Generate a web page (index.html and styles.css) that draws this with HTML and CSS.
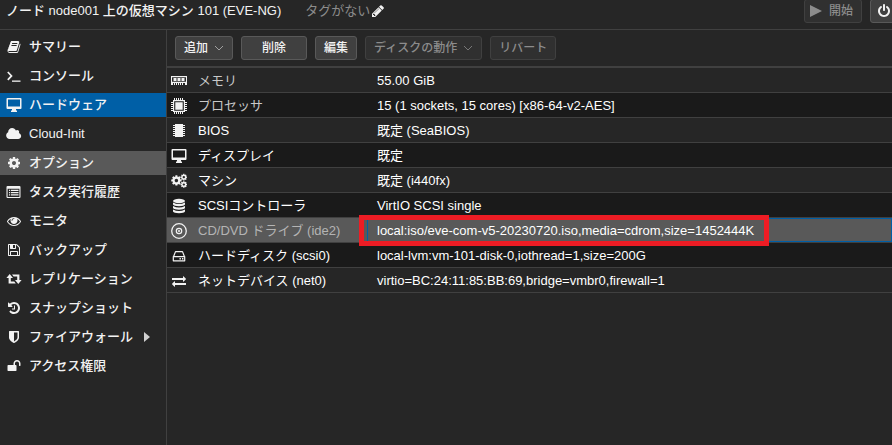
FILE: index.html
```html
<!DOCTYPE html>
<html lang="ja">
<head>
<meta charset="utf-8">
<title>node001 - EVE-NG</title>
<link rel="stylesheet" href="styles.css">
</head>
<body>
<svg class="defs" aria-hidden="true">
  <defs>
    <path id="cog" d="M1152 896q0-106-75-181t-181-75-181 75-75 181 75 181 181 75 181-75 75-181zm512-109v222q0 12-8 23t-20 13l-185 28q-19 54-39 91 35 50 107 138 10 12 10 25t-9 23q-27 37-99 108t-94 71q-12 0-26-9l-138-108q-44 23-91 38-16 136-29 186-7 28-36 28h-222q-14 0-24.5-8.5t-11.5-21.5l-28-184q-49-16-90-37l-141 107q-10 9-25 9-14 0-25-11-126-114-165-168-7-10-7-23 0-12 8-23 15-21 51-66.5t54-70.5q-27-50-41-99l-183-27q-13-2-21-12.5t-8-23.5v-222q0-12 8-23t19-13l186-28q14-46 39-92-40-57-107-138-10-12-10-24 0-10 9-23 26-36 98.5-107.5t94.5-71.5q13 0 26 10l138 107q44-23 91-38 16-136 29-186 7-28 36-28h222q14 0 24.5 8.5t11.5 21.5l28 184q49 16 90 37l142-107q9-9 24-9 13 0 25 10 129 119 165 170 7 8 7 22 0 12-8 23-15 21-51 66.5t-54 70.5q26 50 41 98l183 28q13 2 21 12.5t8 23.5z"/>
    <path id="desktop" fill-rule="evenodd" d="M1.5 1h13a1 1 0 0 1 1 1v9a1 1 0 0 1-1 1H10v1l1 1v1H5v-1l1-1v-1H1.500a1 1 0 0 1-1-1V2a1 1 0 0 1 1-1zM2 2.500v7h12v-7z"/>
  </defs>
</svg>

<header class="topbar">
  <h1 class="title">ノード node001 上の仮想マシン 101 (EVE-NG)</h1>
  <span class="tags">タグがない</span>
  <button class="edit-tags" type="button" aria-label="編集"><svg class="icon" viewBox="-128 -128 2048 2048"><path d="M491 1536l91-91-235-235-91 91v107h128v128h107zm523-928q0-22-22-22-10 0-17 7l-542 542q-7 7-7 17 0 22 22 22 10 0 17-7l542-542q7-7 7-17zm-54-192l416 416-832 832h-416v-416zm683 96q0 53-37 90l-166 166-416-416 166-165q36-38 90-38 53 0 91 38l235 234q37 39 37 91z"/></svg></button>
  <div class="power">
    <button class="btn start" type="button" disabled><svg class="play" viewBox="0 0 12 12"><path d="M0 0L12 6L0 12z"/></svg>開始</button>
    <button class="btn shutdown" type="button" aria-label="シャットダウン"><svg class="icon" viewBox="-128 -128 2048 2048"><path d="M1664 896q0 156-61 298t-164 245-245 164-298 61-298-61-245-164-164-245-61-298q0-182 80.500-343t226.500-270q43-32 95.500-25t83.500 50q32 42 24.500 94.500t-49.500 84.500q-98 74-151.500 181t-53.500 228q0 104 40.500 198.500t109.500 163.500 163.500 109.500 198.500 40.500 198.500-40.500 163.500-109.500 109.500-163.500 40.500-198.500q0-121-53.500-228t-151.500-181q-42-32-49.500-84.500t24.500-94.500q31-43 84-50t95 25q146 109 226.500 270t80.500 343zm-640-768v640q0 52-38 90t-90 38-90-38-38-90v-640q0-52 38-90t90-38 90 38 38 90z"/></svg></button>
  </div>
</header>

<div class="body">
  <nav class="side">
    <a href="#"><svg class="icon" viewBox="-128 -128 2048 2048"><path d="M1703 478q40 57 18 129l-275 906q-19 64-76.500 107.500t-122.500 43.500h-923q-77 0-148.500-53.500t-99.500-131.500q-24-67-2-127 0-4 3-27t4-37q1-8-3-21.500t-3-19.500q2-11 8-21t16.500-23.500 16.500-23.500q23-38 45-91.500t30-91.500q3-10 .5-30t-.5-28q3-11 17-28t17-23q21-36 42-92t25-90q1-9-2.500-32t.5-28q4-13 22-30.500t22-22.500q19-26 42.500-84.500t27.500-96.500q1-8-3-25.500t-2-26.500q2-8 9-18t18-23 17-21q8-12 16.500-30.500t15-35 16-36 19.500-32 26.500-23.500 36-11.500 47.500 5.500l-1 3q38-9 51-9h761q74 0 114 56t18 130l-274 906q-36 119-71.500 153.500t-128.500 34.500h-869q-27 0-38 15-11 16-1 43 24 70 144 70h923q29 0 56-15.500t35-41.500l300-987q7-22 5-57 38 15 59 43zm-1064 2q-4 13 2 22.500t20 9.500h608q13 0 25.500-9.500t16.500-22.500l21-64q4-13-2-22.500t-20-9.500h-608q-13 0-25.500 9.500t-16.500 22.500zm-83 256q-4 13 2 22.500t20 9.500h608q13 0 25.500-9.500t16.500-22.500l21-64q4-13-2-22.500t-20-9.500h-608q-13 0-25.500 9.500t-16.500 22.500z"/></svg>サマリー</a>
    <a href="#"><svg class="icon" viewBox="0 0 16 16"><path d="M1.800 4L5.500 7.900L1.800 11.800" fill="none" stroke="currentColor" stroke-width="1.700"/><path d="M6 12.500h8.500v1.300H6z"/></svg>コンソール</a>
    <a href="#" class="current" aria-current="page"><svg class="icon" viewBox="0 0 16 16"><use href="#desktop"/></svg>ハードウェア</a>
    <a href="#"><svg class="icon" viewBox="-20 -128 2048 2048"><path d="M1920 1152q0 159-112.500 271.500t-271.500 112.500h-1088q-185 0-316.500-131.500t-131.500-316.500q0-132 71-241.500t187-163.500q-2-28-2-43 0-212 150-362t362-150q158 0 286.500 88t187.500 230q70-62 166-62 106 0 181 75t75 181q0 75-41 138 129 30 213 134.500t84 239.500z"/></svg>Cloud-Init</a>
    <a href="#" class="hover"><svg class="icon" viewBox="-128 -128 2048 2048"><use href="#cog"/></svg>オプション</a>
    <a href="#"><svg class="icon" viewBox="0 0 16 16"><path fill-rule="evenodd" d="M1.500 2h12a1 1 0 0 1 1 1v10a1 1 0 0 1-1 1h-12a1 1 0 0 1-1-1V3a1 1 0 0 1 1-1zM1.600 4.700v8.200h11.800V4.700zM3 5.800h1.200v1.200H3zM5 5.800h7.500v1.200H5zM3 8h1.200v1.200H3zM5 8h7.500v1.200H5zM3 10.200h1.200v1.200H3zM5 10.200h7.500v1.200H5z"/></svg>タスク実行履歴</a>
    <a href="#"><svg class="icon" viewBox="-128 -128 2048 2048"><path d="M1664 960q-152-236-381-353 61 104 61 225 0 185-131.500 316.500t-316.500 131.500-316.500-131.500-131.500-316.500q0-121 61-225-229 117-381 353 133 205 333.500 326.500t434.500 121.500 434.500-121.500 333.500-326.500zm-720-384q0-20-14-34t-34-14q-125 0-214.500 89.500t-89.500 214.500q0 20 14 34t34 14 34-14 14-34q0-86 61-147t147-61q20 0 34-14t14-34zm848 384q0 34-20 69-140 230-376.500 368.500t-499.500 138.500-499.500-139-376.500-368q-20-35-20-69t20-69q140-229 376.500-368t499.500-139 499.500 139 376.500 368q20 35 20 69z"/></svg>モニタ</a>
    <a href="#"><svg class="icon" viewBox="-128 -128 2048 2048"><path d="M512 1536h768v-384h-768v384zm896 0h128v-896q0-14-10-38.500t-20-34.500l-281-281q-10-10-34-20t-39-10v416q0 40-28 68t-68 28h-576q-40 0-68-28t-28-68v-416h-128v1280h128v-416q0-40 28-68t68-28h832q40 0 68 28t28 68v416zm-384-928v-320q0-13-9.500-22.500t-22.500-9.500h-192q-13 0-22.500 9.500t-9.500 22.500v320q0 13 9.500 22.500t22.500 9.500h192q13 0 22.500-9.500t9.500-22.500zm640 32v928q0 40-28 68t-68 28h-1344q-40 0-68-28t-28-68v-1344q0-40 28-68t68-28h928q40 0 88 20t76 48l280 280q28 28 48 76t20 88z"/></svg>バックアップ</a>
    <a href="#"><svg class="icon" viewBox="0 0 16 16"><path d="M3.700 3L.4 7h2.200v5.500h7.200L8.200 10.500H4.800V7h2.200zM6 3.500h7.400V9h2.200l-3.300 4L9 9h2.200V5.500H7.600z"/></svg>レプリケーション</a>
    <a href="#"><svg class="icon" viewBox="-128 -128 2048 2048"><path d="M1664 896q0 156-61 298t-164 245-245 164-298 61q-172 0-327-72.500t-264-204.500q-7-10-6.500-22.500t8.500-20.500l137-138q10-9 25-9 16 2 23 12 73 95 179 147t225 52q104 0 198.500-40.500t163.500-109.500 109.500-163.500 40.500-198.500-40.500-198.500-109.500-163.500-163.500-109.500-198.500-40.500q-98 0-188 35.500t-160 101.500l137 138q31 30 14 69-17 40-59 40h-448q-26 0-45-19t-19-45v-448q0-42 40-59 39-17 69 14l130 129q107-101 244.500-156.500t284.500-55.500q156 0 298 61t245 164 164 245 61 298zm-640-288v448q0 14-9 23t-23 9h-320q-14 0-23-9t-9-23v-64q0-14 9-23t23-9h224v-352q0-14 9-23t23-9h64q14 0 23 9t9 23z"/></svg>スナップショット</a>
    <a href="#"><svg class="icon" viewBox="-128 -128 2048 2048"><path d="M1344 960v-640h-448v1137q119-63 213-137 235-184 235-360zm192-768v768q0 86-33.500 170.500t-83 150-118 127.500-126.500 103-121 77.500-89.500 49.500-42.500 20q-12 6-26 6t-26-6q-16-7-42.500-20t-89.500-49.500-121-77.500-126.500-103-118-127.500-83-150-33.500-170.500v-768q0-26 19-45t45-19h1152q26 0 45 19t19 45z"/></svg>ファイアウォール<svg class="more" viewBox="0 0 6 10"><path d="M0 0L6 5L0 10z"/></svg></a>
    <a href="#"><svg class="icon" viewBox="-128 -128 2048 2048"><path d="M1728 576v256q0 26-19 45t-45 19h-64q-26 0-45-19t-19-45v-256q0-106-75-181t-181-75-181 75-75 181v192h96q40 0 68 28t28 68v576q0 40-28 68t-68 28h-960q-40 0-68-28t-28-68v-576q0-40 28-68t68-28h672v-192q0-185 131.500-316.500t316.500-131.500 316.500 131.500 131.500 316.500z"/></svg>アクセス権限</a>
  </nav>

  <main class="panel">
    <div class="toolbar">
      <button class="btn" type="button">追加<svg class="chev" viewBox="0 0 10 6"><path d="M1 1L5 5L9 1"/></svg></button>
      <button class="btn wide" type="button">削除</button>
      <button class="btn" type="button">編集</button>
      <button class="btn" type="button" disabled>ディスクの動作<svg class="chev" viewBox="0 0 10 6"><path d="M1 1L5 5L9 1"/></svg></button>
      <button class="btn wide" type="button" disabled>リバート</button>
    </div>
    <table class="grid">
      <tbody>
        <tr><th scope="row" class="dim"><div class="key"><svg class="icon" viewBox="0 0 16 16"><path fill-rule="evenodd" d="M0 3h16v7H0zM1 4.300v4.400h14V4.300zM2.500 5h3v3h-3zM6.500 5h3v3h-3zM10.500 5h3v3h-3zM0 10h2v2H0zM3 10h1v2H3zM5 10h1v2H5zM7 10h1v2H7zM9 10h1v2H9zM11 10h1v2h-1zM14 10h2v2h-2z"/></svg>メモリ</div></th><td>55.00 GiB</td></tr>
        <tr><th scope="row" class="dim"><div class="key"><svg class="icon" viewBox="0 0 16 16"><path fill-rule="evenodd" d="M2 2h12v12H2zM3.200 3.200v9.600h9.600V3.200zM4.300 4.300h7.400v7.400H4.300z"/><path d="M3.500 0v2M5.500 0v2M7.500 0v2M9.500 0v2M11.500 0v2M3.500 14v2M5.500 14v2M7.500 14v2M9.500 14v2M11.500 14v2M0 4.500h2M0 6.500h2M0 8.500h2M0 10.500h2M0 12.500h2M14 4.500h2M14 6.500h2M14 8.500h2M14 10.500h2M14 12.500h2" stroke="currentColor"/></svg>プロセッサ</div></th><td>15 (1 sockets, 15 cores) [x86-64-v2-AES]</td></tr>
        <tr><th scope="row"><div class="key"><svg class="icon" viewBox="0 0 16 16"><path d="M4 1h8v13H4z"/><path d="M2 2.500h12M2 4.500h12M2 6.500h12M2 8.500h12M2 10.500h12M2 12.500h12" stroke="currentColor"/></svg>BIOS</div></th><td>既定 (SeaBIOS)</td></tr>
        <tr><th scope="row"><div class="key"><svg class="icon" viewBox="0 0 16 16"><use href="#desktop"/></svg>ディスプレイ</div></th><td>既定</td></tr>
        <tr><th scope="row"><div class="key"><svg class="icon" viewBox="0 0 2048 2048"><use href="#cog" transform="translate(-80 180) scale(.86)"/><use href="#cog" transform="translate(1140 30) scale(.56)"/><use href="#cog" transform="translate(1140 970) scale(.56)"/></svg>マシン</div></th><td>既定 (i440fx)</td></tr>
        <tr><th scope="row"><div class="key"><svg class="icon" viewBox="0 0 16 16"><ellipse cx="8" cy="3" rx="6" ry="2.200"/><path d="M2 4.500q6 3 12 0v2q-1 1.700-6 1.700T2 6.500zM2 8q6 3 12 0v2q-1 1.700-6 1.700T2 10zM2 11.500q6 3 12 0v2q-1 1.700-6 1.700T2 13.500z"/></svg>SCSIコントローラ</div></th><td>VirtIO SCSI single</td></tr>
        <tr class="selected"><th scope="row"><div class="key"><svg class="icon" viewBox="0 0 16 16"><g fill="none" stroke="currentColor"><circle cx="8" cy="8" r="7.300" stroke-width="1.300"/><circle cx="8" cy="8" r="2.700" stroke-width="1.200"/></g><circle cx="8" cy="8" r="1"/></svg>CD/DVD ドライブ (ide2)</div></th><td><span class="marked">local:iso/eve-com-v5-20230720.iso,media=cdrom,size=1452444K</span></td></tr>
        <tr><th scope="row"><div class="key"><svg class="icon" viewBox="0 0 16 16"><path d="M2.600 8.500L4.500 3.600h7L13.400 8.500M2.300 8.600h11.400v4.200H2.300z" fill="none" stroke="currentColor" stroke-width="1.200" stroke-linejoin="round"/><path d="M8.500 10h1.400v1.400H8.500zM11 10h1.400v1.400H11z"/></svg>ハードディスク (scsi0)</div></th><td>local-lvm:vm-101-disk-0,iothread=1,size=200G</td></tr>
        <tr><th scope="row"><div class="key"><svg class="icon" viewBox="-128 -128 2048 2048"><path d="M1792 1184v192q0 13-9.500 22.500t-22.500 9.500h-1376v192q0 13-9.500 22.500t-22.500 9.500q-12 0-24-10l-319-320q-9-9-9-22 0-14 9-23l320-320q9-9 23-9 13 0 22.500 9.500t9.500 22.500v192h1376q13 0 22.500 9.500t9.500 22.500zm0-544q0 14-9 23l-320 320q-9 9-23 9-13 0-22.500-9.500t-9.500-22.500v-192h-1376q-13 0-22.500-9.500t-9.500-22.500v-192q0-13 9.500-22.500t22.500-9.500h1376v-192q0-14 9-23t23-9q12 0 24 10l319 319q9 9 9 23z"/></svg>ネットデバイス (net0)</div></th><td>virtio=BC:24:11:85:BB:69,bridge=vmbr0,firewall=1</td></tr>
      </tbody>
    </table>
  </main>
</div>
</body>
</html>
```
FILE: styles.css
```css
* {
  box-sizing: border-box;
}

body {
  margin: 0;
  min-height: 100vh;
  display: flex;
  flex-direction: column;
  overflow: hidden;
  background: #262626;
  color: #f2f2f2;
  font: 13px/16px "Liberation Sans", "Noto Sans CJK JP", sans-serif;
}

.defs {
  display: none;
}

.icon {
  flex: none;
  width: 16px;
  height: 16px;
  fill: currentColor;
}

.topbar {
  display: flex;
  align-items: center;
  height: 30px;
  padding: 0 0 7px 6px;
  border-bottom: 1px solid #404040;
  white-space: nowrap;
}

.title {
  margin: 0 24px 0 0;
  font-size: 13px;
  font-weight: 500;
}

.tags {
  color: #8c8c8c;
}

.edit-tags {
  display: flex;
  padding: 0;
  border: 0;
  background: none;
  color: #f2f2f2;
}

.power {
  display: flex;
  gap: 8px;
  margin: 0 -6px 0 auto;
}

.btn {
  display: flex;
  align-items: center;
  justify-content: center;
  height: 24px;
  padding: 0 8px;
  border: 1px solid #595959;
  border-radius: 3px;
  background: #404040;
  color: #f2f2f2;
  font: inherit;
  font-size: 12px;
  font-weight: 500;
}

.btn:disabled {
  border-color: #404040;
  background: #303030;
  color: #8c8c8c;
}

.wide {
  min-width: 66px;
}

.start {
  padding: 0 8px 0 5px;
}

.shutdown {
  padding: 0 5px;
}

.play {
  width: 12px;
  height: 12px;
  margin-right: 7px;
  fill: currentColor;
}

.chev {
  width: 10px;
  height: 6px;
  margin-left: 6px;
  fill: none;
  stroke: #a0a0a0;
}

.btn:disabled .chev {
  stroke: #777;
}

.body {
  flex: 1;
  display: flex;
}

.side {
  flex: none;
  display: flex;
  flex-direction: column;
  gap: 5px;
  width: 167px;
  padding-top: 5px;
  border-right: 1px solid #404040;
}

.side a {
  display: flex;
  align-items: center;
  gap: 7px;
  height: 24px;
  padding-left: 6px;
  color: #f2f2f2;
  font-weight: 500;
  text-decoration: none;
  white-space: nowrap;
}

.side .current {
  background: #005fa6;
}

.side .hover {
  background: #595959;
}

.more {
  width: 6px;
  height: 10px;
  margin-left: 4px;
  fill: #d0d0d0;
}

.panel {
  flex: 1;
  min-width: 0;
}

.toolbar {
  display: flex;
  align-items: center;
  gap: 8px;
  height: 38px;
  padding: 0 8px;
  border-bottom: 2px solid #404040;
}

.grid {
  width: 100%;
  table-layout: fixed;
  border-collapse: separate;
  border-spacing: 0;
  white-space: nowrap;
}

.grid th,
.grid td {
  height: 25px;
  padding: 2px 10px 0;
  border-bottom: 1px solid #404040;
  color: #fff;
  text-align: left;
  font-weight: 400;
}

.grid th {
  width: 200px;
  padding: 1px 4px 0;
}

.key {
  display: flex;
  align-items: center;
  gap: 11px;
}

.grid .dim {
  color: #c8c8c8;
}

.grid tr:nth-child(even) {
  background: #1a1a1a;
}

.grid .selected {
  background: #595959;
}

.grid .selected th {
  color: #b4b4b4;
}

.key .icon {
  color: #f2f2f2;
}

.selected td {
  box-shadow: inset 0 0 0 1px #005fa6;
}

.marked {
  position: relative;
}

.marked::after {
  content: "";
  position: absolute;
  inset: -8px -15px -8px -18px;
  border: 5px solid #ed1c24;
}
```
